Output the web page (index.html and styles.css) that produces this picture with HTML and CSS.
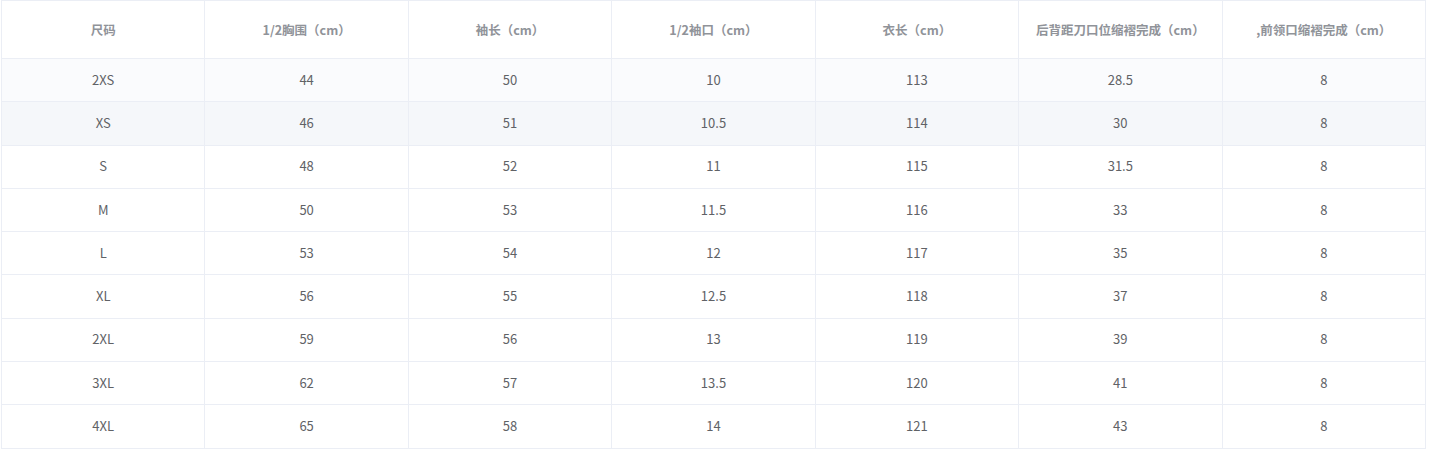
FILE: index.html
```html
<!DOCTYPE html>
<html lang="zh-CN">
<head>
<meta charset="utf-8">
<title>尺码表</title>
<link rel="stylesheet" href="styles.css">
</head>
<body>
<div class="wrap">
<table class="size-table">
  <thead>
    <tr>
      <th>尺码</th>
      <th>1/2胸围（cm）</th>
      <th>袖长（cm）</th>
      <th>1/2袖口（cm）</th>
      <th>衣长（cm）</th>
      <th>后背距刀口位缩褶完成（cm）</th>
      <th>,前领口缩褶完成（cm）</th>
    </tr>
  </thead>
  <tbody>
    <tr class="stripe"><td>2XS</td><td>44</td><td>50</td><td>10</td><td>113</td><td>28.5</td><td>8</td></tr>
    <tr class="hover"><td>XS</td><td>46</td><td>51</td><td>10.5</td><td>114</td><td>30</td><td>8</td></tr>
    <tr><td>S</td><td>48</td><td>52</td><td>11</td><td>115</td><td>31.5</td><td>8</td></tr>
    <tr><td>M</td><td>50</td><td>53</td><td>11.5</td><td>116</td><td>33</td><td>8</td></tr>
    <tr><td>L</td><td>53</td><td>54</td><td>12</td><td>117</td><td>35</td><td>8</td></tr>
    <tr><td>XL</td><td>56</td><td>55</td><td>12.5</td><td>118</td><td>37</td><td>8</td></tr>
    <tr><td>2XL</td><td>59</td><td>56</td><td>13</td><td>119</td><td>39</td><td>8</td></tr>
    <tr><td>3XL</td><td>62</td><td>57</td><td>13.5</td><td>120</td><td>41</td><td>8</td></tr>
    <tr><td>4XL</td><td>65</td><td>58</td><td>14</td><td>121</td><td>43</td><td>8</td></tr>
  </tbody>
</table>
</div>
</body>
</html>
```
FILE: styles.css
```css
html, body {
  margin: 0;
  padding: 0;
  background: #ffffff;
}
.wrap {
  padding-left: 1px;
}
.size-table {
  width: 1425px;
  border-collapse: collapse;
  table-layout: fixed;
  font-family: "Noto Sans CJK SC", "Noto Sans", sans-serif;
  font-size: 13px;
  color: #606266;
}
.size-table th,
.size-table td {
  border: 1px solid #ebeef5;
  text-align: center;
  vertical-align: middle;
  padding: 0;
}
.size-table th {
  height: 57px;
  color: #909399;
  font-weight: bold;
  font-size: 12.5px;
}
.size-table td {
  height: 40.3px;
  padding-bottom: 2px;
}
.size-table tr.stripe td {
  background: #fafbfd;
}
.size-table tr.hover td {
  background: #f5f7fa;
}
```
